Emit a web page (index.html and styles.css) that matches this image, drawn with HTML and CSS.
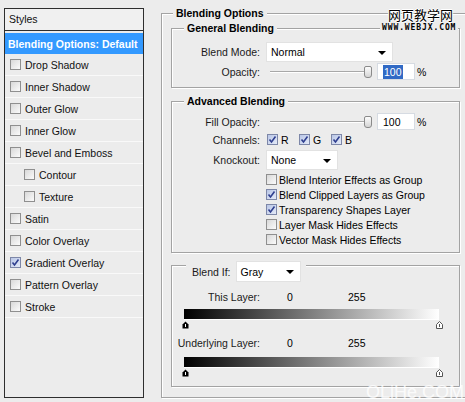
FILE: index.html
```html
<!DOCTYPE html>
<html lang="en">
<head>
    <meta charset="UTF-8">
    <title>Layer Style</title>
    <link rel="stylesheet" href="styles.css">
</head>
<body>
    <div class="dialog">
        <div class="styles-panel">
            <div class="styles-head">Styles</div>
            <ul class="style-list">
                <li class="style-item active">Blending Options: Default</li>
                <li class="style-item"><span class="cb"></span>Drop Shadow</li>
                <li class="style-item"><span class="cb"></span>Inner Shadow</li>
                <li class="style-item"><span class="cb"></span>Outer Glow</li>
                <li class="style-item"><span class="cb"></span>Inner Glow</li>
                <li class="style-item"><span class="cb"></span>Bevel and Emboss</li>
                <li class="style-item sub"><span class="cb"></span>Contour</li>
                <li class="style-item sub"><span class="cb"></span>Texture</li>
                <li class="style-item"><span class="cb"></span>Satin</li>
                <li class="style-item"><span class="cb"></span>Color Overlay</li>
                <li class="style-item"><span class="cb on"><svg width="9" height="9" viewBox="0 0 9 9"><path d="M1.5 4.5 L3.5 7 L7.5 1.5" fill="none" stroke="#2f3f8f" stroke-width="1.6"/></svg></span>Gradient Overlay</li>
                <li class="style-item"><span class="cb"></span>Pattern Overlay</li>
                <li class="style-item"><span class="cb"></span>Stroke</li>
            </ul>
        </div>

        <div class="options">
            <div class="group outer">
                <div class="group-title outer-title">Blending Options</div>

                <div class="group general">
                    <div class="group-title">General Blending</div>
                    <div class="row row-mode">
                        <label class="lbl">Blend Mode:</label>
                        <div class="select select-mode">Normal<span class="arrow"></span></div>
                    </div>
                    <div class="row row-slider">
                        <label class="lbl">Opacity:</label>
                        <div class="track"></div>
                        <div class="thumb"></div>
                        <div class="num"><span class="sel">100</span></div>
                        <span class="pct">%</span>
                    </div>
                </div>

                <div class="group advanced">
                    <div class="group-title">Advanced Blending</div>
                    <div class="row row-slider fill-row">
                        <label class="lbl">Fill Opacity:</label>
                        <div class="track"></div>
                        <div class="thumb"></div>
                        <div class="num">100</div>
                        <span class="pct">%</span>
                    </div>
                    <div class="row row-channels">
                        <label class="lbl">Channels:</label>
                        <div class="channels">
                            <span class="channel"><span class="cb on"><svg width="9" height="9" viewBox="0 0 9 9"><path d="M1.5 4.5 L3.5 7 L7.5 1.5" fill="none" stroke="#2f3f8f" stroke-width="1.6"/></svg></span>R</span>
                            <span class="channel"><span class="cb on"><svg width="9" height="9" viewBox="0 0 9 9"><path d="M1.5 4.5 L3.5 7 L7.5 1.5" fill="none" stroke="#2f3f8f" stroke-width="1.6"/></svg></span>G</span>
                            <span class="channel"><span class="cb on"><svg width="9" height="9" viewBox="0 0 9 9"><path d="M1.5 4.5 L3.5 7 L7.5 1.5" fill="none" stroke="#2f3f8f" stroke-width="1.6"/></svg></span>B</span>
                        </div>
                    </div>
                    <div class="row row-knockout">
                        <label class="lbl">Knockout:</label>
                        <div class="select select-knockout">None<span class="arrow"></span></div>
                    </div>
                    <div class="check-list">
                        <div class="check-row"><span class="cb"></span>Blend Interior Effects as Group</div>
                        <div class="check-row"><span class="cb on"><svg width="9" height="9" viewBox="0 0 9 9"><path d="M1.5 4.5 L3.5 7 L7.5 1.5" fill="none" stroke="#2f3f8f" stroke-width="1.6"/></svg></span>Blend Clipped Layers as Group</div>
                        <div class="check-row"><span class="cb on"><svg width="9" height="9" viewBox="0 0 9 9"><path d="M1.5 4.5 L3.5 7 L7.5 1.5" fill="none" stroke="#2f3f8f" stroke-width="1.6"/></svg></span>Transparency Shapes Layer</div>
                        <div class="check-row"><span class="cb"></span>Layer Mask Hides Effects</div>
                        <div class="check-row"><span class="cb"></span>Vector Mask Hides Effects</div>
                    </div>
                </div>

                <div class="group blend-if">
                    <div class="group-title blend-if-title">
                        Blend If:
                        <div class="select select-gray">Gray<span class="arrow"></span></div>
                    </div>
                    <div class="level-row this-layer">
                        <span class="lbl">This Layer:</span>
                        <span class="zero">0</span>
                        <span>255</span>
                    </div>
                    <div class="ramp"></div>
                    <div class="markers">
                        <svg width="7" height="8" viewBox="0 0 7 8"><path d="M3.5 0.5 L6.5 3.5 V7.5 H0.5 V3.5 Z" fill="#000"/><path d="M3.5 3 V6" stroke="#fff" stroke-width="1"/></svg>
                        <svg width="7" height="8" viewBox="0 0 7 8"><path d="M3.5 0.5 L6.5 3.5 V7.5 H0.5 V3.5 Z" fill="#fff" stroke="#555" stroke-width="1"/><path d="M3.5 3 V6" stroke="#555" stroke-width="1"/></svg>
                    </div>
                    <div class="level-row under-layer">
                        <span class="lbl">Underlying Layer:</span>
                        <span class="zero">0</span>
                        <span>255</span>
                    </div>
                    <div class="ramp"></div>
                    <div class="markers">
                        <svg width="7" height="8" viewBox="0 0 7 8"><path d="M3.5 0.5 L6.5 3.5 V7.5 H0.5 V3.5 Z" fill="#000"/><path d="M3.5 3 V6" stroke="#fff" stroke-width="1"/></svg>
                        <svg width="7" height="8" viewBox="0 0 7 8"><path d="M3.5 0.5 L6.5 3.5 V7.5 H0.5 V3.5 Z" fill="#fff" stroke="#555" stroke-width="1"/><path d="M3.5 3 V6" stroke="#555" stroke-width="1"/></svg>
                    </div>
                </div>
            </div>
        </div>

        <div class="mark-cn">网页教学网</div>
        <div class="mark-url">WWW.WEBJX.COM</div>
        <div class="mark-olihe">OLiHe.COM</div>
    </div>
</body>
</html>
```

FILE: styles.css
```css
body {
    margin: 0;
    background: #ececec;
    font-family: "Liberation Sans", Arial, sans-serif;
    font-size: 10.5px;
    color: #111;
    overflow: hidden;
}
.dialog {
    position: relative;
    display: flex;
    align-items: flex-start;
    width: 465px;
    height: 402px;
    overflow: hidden;
}

/* left list */
.styles-panel {
    box-sizing: border-box;
    flex: none;
    width: 140px;
    height: 390px;
    margin: 8px 0 0 4px;
    border: 1px solid #2e2e2e;
    background: #ececec;
}
.styles-head {
    height: 21px;
    line-height: 21px;
    padding-left: 4px;
    background: #f0f0f0;
    border-bottom: 1px solid #2e2e2e;
    margin-bottom: 2px;
}
.style-list {
    list-style: none;
    margin: 0;
    padding: 0;
}
.style-item {
    display: flex;
    align-items: center;
    height: 21px;
    padding-left: 5px;
    border-bottom: 1px solid #f9f9f9;
}
.style-item .cb {
    margin-right: 4px;
}
.style-item.sub {
    padding-left: 19px;
}
.style-item.active {
    background: #3399ff;
    color: #fff;
    font-weight: bold;
    padding-left: 3px;
    border-bottom: none;
}

/* checkboxes */
.cb {
    box-sizing: border-box;
    display: inline-flex;
    align-items: center;
    justify-content: center;
    flex: none;
    width: 11px;
    height: 11px;
    border: 1px solid #8f8f8f;
    background: linear-gradient(135deg, #d8d8d8, #fbfbfb);
}
.cb.on {
    border-color: #7d87a8;
    background: linear-gradient(135deg, #b9c6e6, #e4eaf8);
}

/* right side groups */
.options {
    flex: none;
    margin: 13px 0 0 17px;
}
.group {
    box-sizing: border-box;
    display: flex;
    flex-direction: column;
    align-items: flex-start;
    border: 1px solid #a3a3a3;
    box-shadow: 1px 1px 0 #fff, inset 1px 1px 0 #fff;
}
.group-title {
    display: flex;
    align-items: center;
    height: 14px;
    margin: -8px 0 0 12px;
    padding: 0 3px;
    background: #ececec;
    font-weight: bold;
    color: #000;
}
.outer {
    width: 309px;
    height: 385px;
    padding-left: 9px;
}
.outer-title {
    margin-left: 2px;
}
.general, .advanced, .blend-if {
    width: 289px;
}
.general {
    height: 60px;
    margin-top: 8px;
}
.advanced {
    height: 152px;
    margin-top: 13px;
}
.blend-if {
    height: 122px;
    margin-top: 12px;
}

.row {
    display: flex;
    align-items: center;
}
.lbl {
    box-sizing: border-box;
    width: 89px;
    padding-right: 1px;
    text-align: right;
    margin-right: 5px;
    color: #1a1a1a;
}
.row-mode {
    height: 20px;
    margin-top: 7px;
}
.row-slider {
    height: 17px;
    margin-top: 1px;
}
.fill-row {
    margin-top: 5px;
}
.row-channels {
    height: 19px;
}
.row-knockout {
    height: 20px;
    margin-top: 1px;
}

.select {
    box-sizing: border-box;
    position: relative;
    display: flex;
    align-items: center;
    height: 20px;
    padding-left: 4px;
    background: #fff;
    border: 1px solid #e2e2e2;
    color: #000;
    font-weight: normal;
}
.select-mode {
    width: 127px;
}
.select-knockout {
    width: 72px;
}
.select-gray {
    width: 65px;
    height: 21px;
    margin-left: 5px;
}
.arrow {
    position: absolute;
    right: 6px;
    top: 8px;
    width: 0;
    height: 0;
    border-left: 4px solid transparent;
    border-right: 4px solid transparent;
    border-top: 4px solid #000;
}

.track {
    width: 94px;
    height: 1px;
    margin-left: 4px;
    background: #a8a8a8;
    border-bottom: 1px solid #fff;
}
.thumb {
    box-sizing: border-box;
    width: 8px;
    height: 12px;
    border: 1px solid #8a8a8a;
    border-radius: 2px 2px 3px 3px;
    background: linear-gradient(#fdfdfd, #d4d4d4);
}
.num {
    box-sizing: border-box;
    display: flex;
    align-items: center;
    width: 38px;
    height: 17px;
    margin-left: 5px;
    padding-left: 5px;
    background: #fff;
    border: 1px solid #d6dbe2;
    color: #000;
}
.sel {
    background: #316ac5;
    color: #fff;
    padding: 1px 1px;
}
.pct {
    margin-left: 2px;
    color: #000;
}

.channels {
    display: flex;
    margin-left: 1px;
}
.channel {
    display: flex;
    align-items: center;
    width: 32px;
    color: #000;
}
.channel .cb {
    margin-right: 3px;
}

.check-list {
    margin: 2px 0 0 94px;
}
.check-row {
    display: flex;
    align-items: center;
    height: 15px;
    color: #000;
}
.check-row .cb {
    margin-right: 2px;
}

/* blend if */
.blend-if-title {
    height: 21px;
    margin: -5px 0 0 14px;
    padding: 0 5px 0 6px;
    font-weight: normal;
    color: #1a1a1a;
}
.level-row {
    display: grid;
    grid-template-columns: 89px 87px auto;
    align-items: center;
    height: 14px;
    color: #000;
}
.level-row .lbl {
    margin-right: 0;
}
.level-row .zero {
    padding-left: 26px;
}
.this-layer {
    margin-top: 8px;
}
.under-layer {
    margin-top: 7px;
}
.ramp {
    width: 255px;
    height: 10px;
    margin: 5px 0 0 12px;
    background: linear-gradient(to right, #000, #fff);
    border-bottom: 1px solid #fff;
}
.under-layer + .ramp {
    margin-top: 7px;
}
.markers {
    display: flex;
    justify-content: space-between;
    width: 261px;
    height: 8px;
    margin: 1px 0 0 10px;
}

/* watermarks */
.mark-cn {
    position: absolute;
    left: 388px;
    top: 7px;
    font-family: "Noto Sans CJK SC", sans-serif;
    font-size: 13px;
    line-height: 15px;
    color: #000;
    text-shadow: 1px 0 0 #fff, -1px 0 0 #fff, 0 1px 0 #fff, 0 -1px 0 #fff;
}
.mark-url {
    position: absolute;
    left: 380px;
    top: 23px;
    padding: 0 2px;
    background: #ececec;
    font-family: "DejaVu Sans Mono", monospace;
    font-weight: bold;
    font-size: 8px;
    line-height: 10px;
    letter-spacing: 0.9px;
    color: #000;
}
.mark-olihe {
    position: absolute;
    right: 1px;
    bottom: 1px;
    font-family: "Liberation Sans", Arial, sans-serif;
    font-size: 18px;
    line-height: 18px;
    color: rgba(255, 255, 255, 0.8);
}
```
